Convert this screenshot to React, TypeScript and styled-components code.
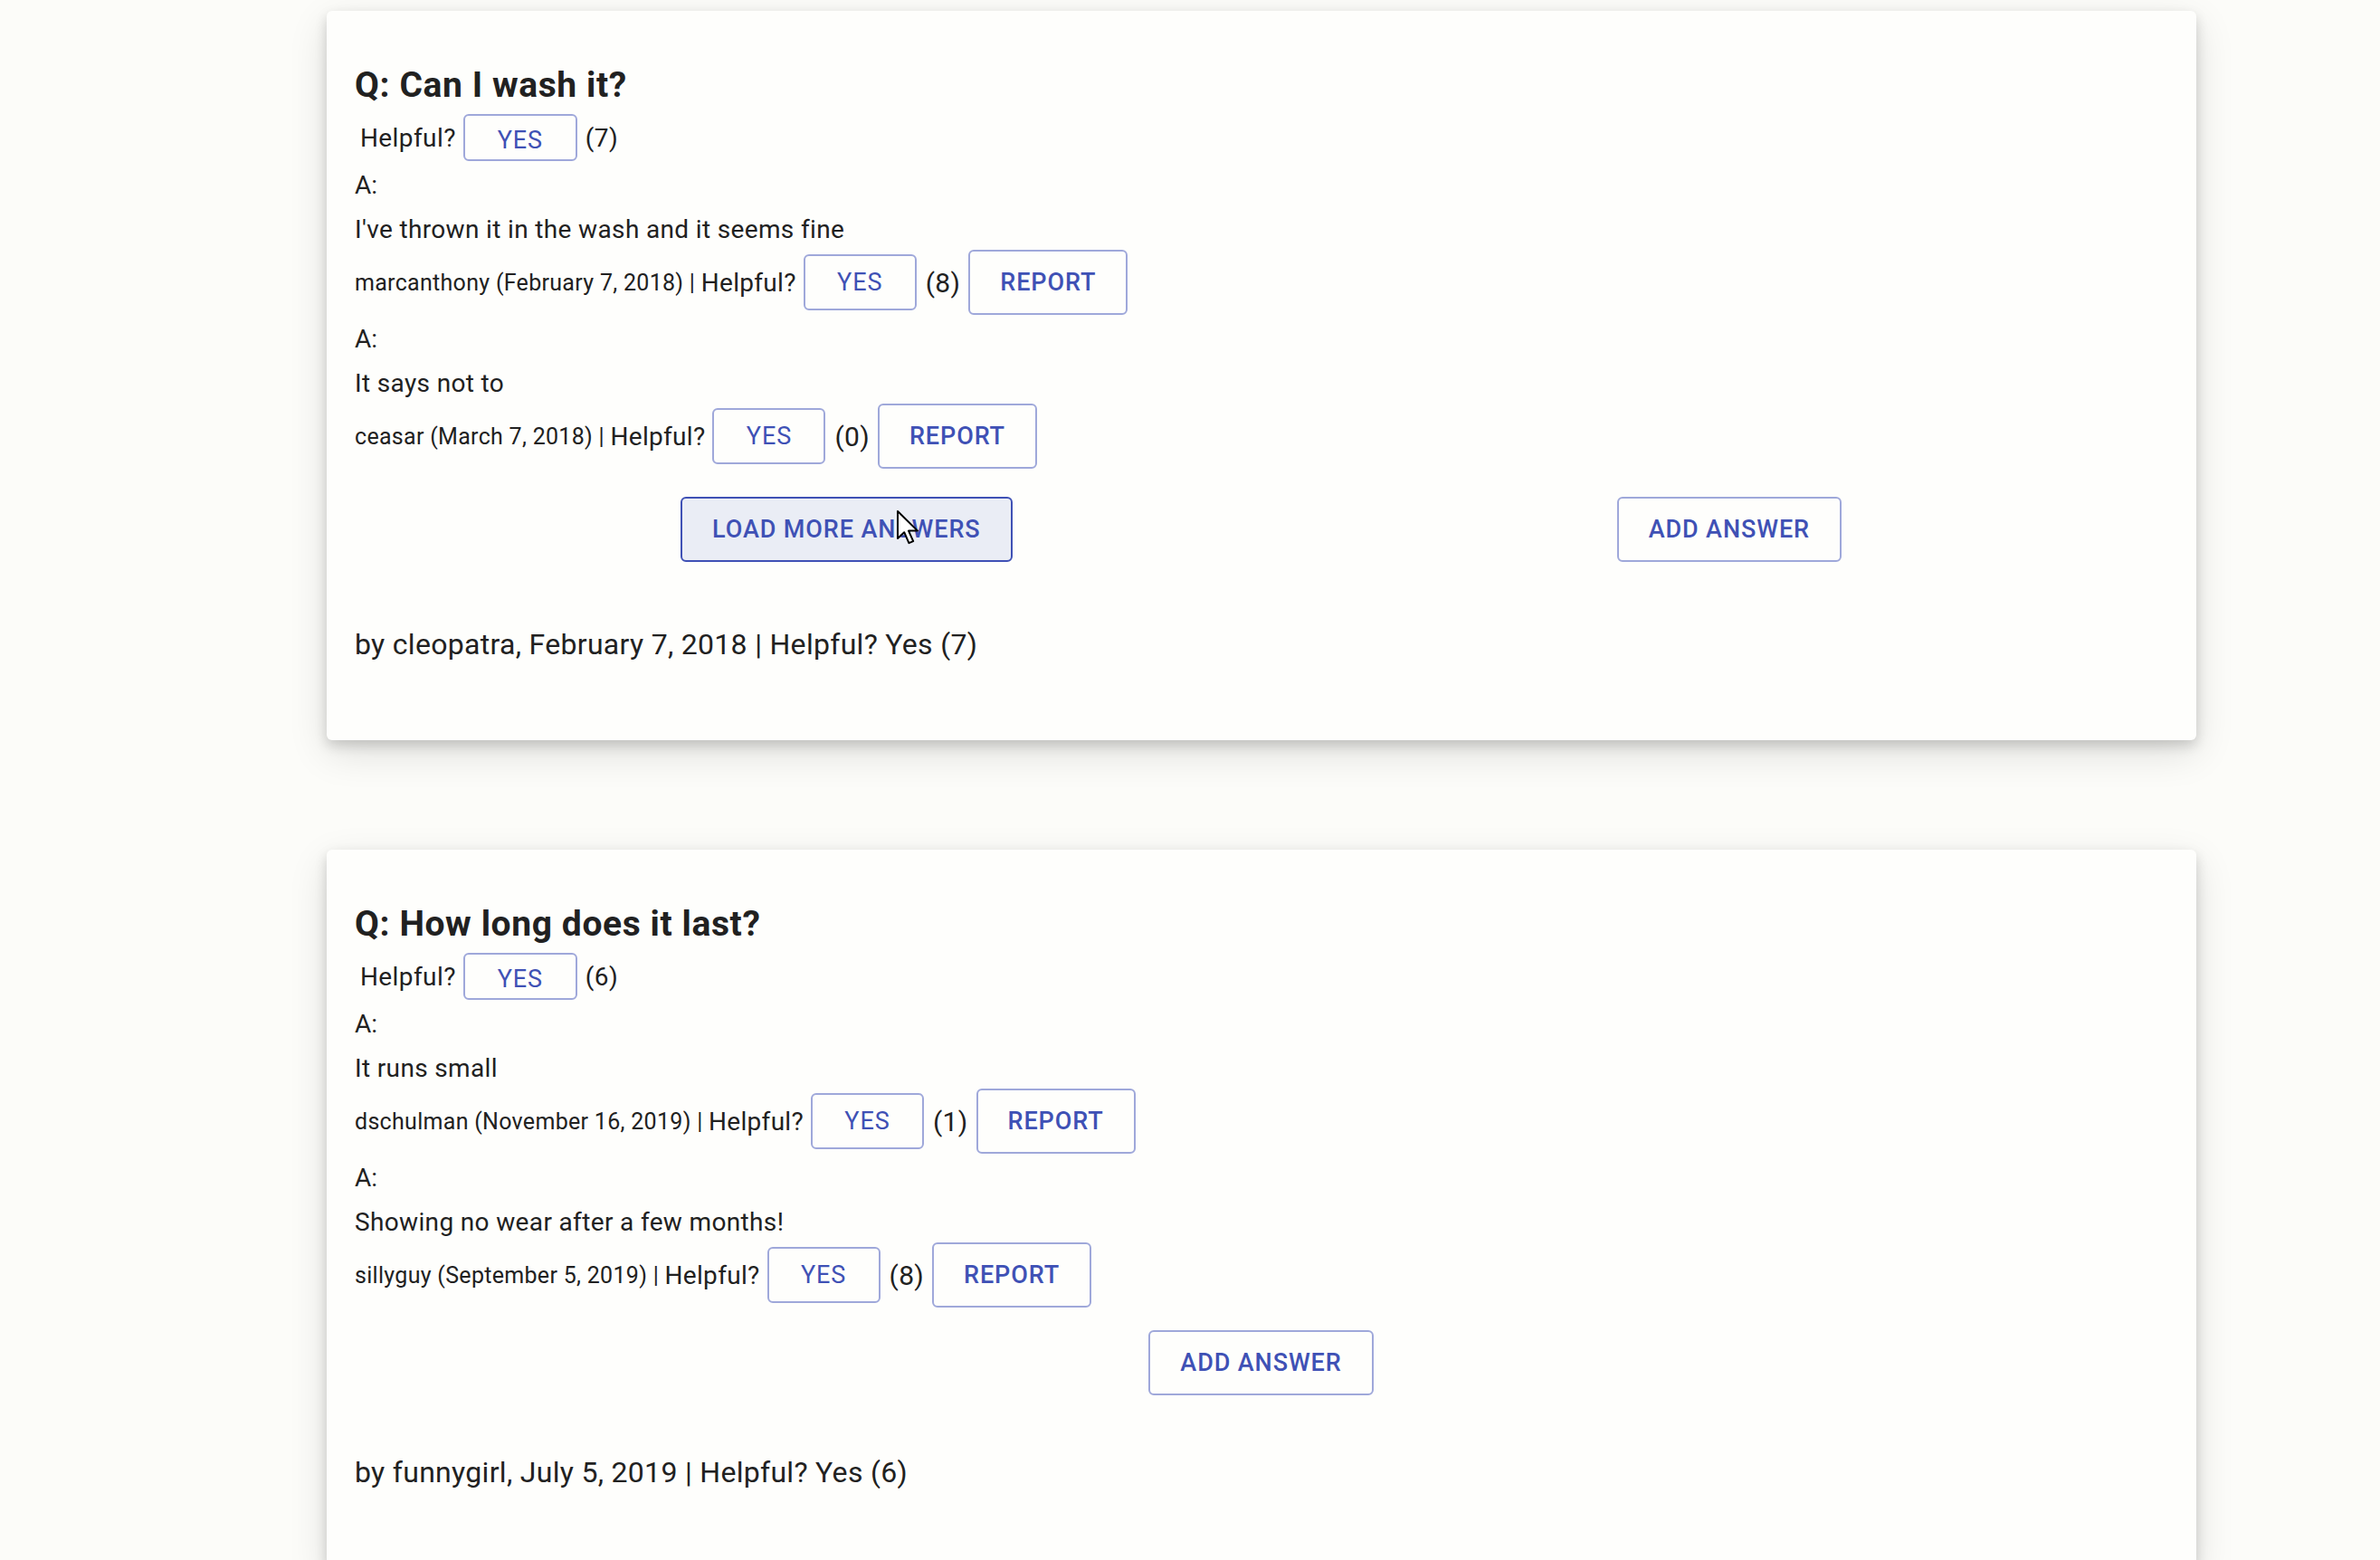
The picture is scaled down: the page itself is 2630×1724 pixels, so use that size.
import styled, { createGlobalStyle } from 'styled-components';

const GlobalStyle = createGlobalStyle`
  body {
    margin: 0;
    background: #fcfcf9;
    font-family: Roboto, "Liberation Sans", sans-serif;
    color: #212121;
  }
`;

interface Answer {
  body: string;
  user: string;
  date: string;
  helpful: number;
}

interface Question {
  title: string;
  helpful: number;
  asker: string;
  date: string;
  answers: Answer[];
  hasMore: boolean;
}

const questions: Question[] = [
  {
    title: 'Can I wash it?',
    helpful: 7,
    asker: 'cleopatra',
    date: 'February 7, 2018',
    hasMore: true,
    answers: [
      { body: "I've thrown it in the wash and it seems fine", user: 'marcanthony', date: 'February 7, 2018', helpful: 8 },
      { body: 'It says not to', user: 'ceasar', date: 'March 7, 2018', helpful: 0 },
    ],
  },
  {
    title: 'How long does it last?',
    helpful: 6,
    asker: 'funnygirl',
    date: 'July 5, 2019',
    hasMore: false,
    answers: [
      { body: 'It runs small', user: 'dschulman', date: 'November 16, 2019', helpful: 1 },
      { body: 'Showing no wear after a few months!', user: 'sillyguy', date: 'September 5, 2019', helpful: 8 },
    ],
  },
];

const Page = styled.div`
  display: flex;
  flex-direction: column;
  gap: 121px;
  padding: 12px 0 0 361px;
`;

const Card = styled.section`
  width: 2066px;
  box-sizing: border-box;
  padding: 60px 32px 86px 31px;
  background: #fefefc;
  border-radius: 6px;
  box-shadow: 0 6px 14px rgba(0, 0, 0, 0.16), 0 14px 44px rgba(0, 0, 0, 0.12);
`;

const Title = styled.h3`
  margin: 0;
  font-size: 39px;
  font-weight: 700;
  line-height: 44px;
  letter-spacing: 0.6px;
`;

const HelpfulRow = styled.div`
  display: flex;
  align-items: center;
  margin-top: 10px;
  padding-left: 6px;
  font-size: 28px;
  letter-spacing: 0.4px;
`;

const Label = styled.div`
  margin-top: 7px;
  font-size: 28px;
  line-height: 40px;
`;

const AnswerBody = styled.div`
  margin-top: 9px;
  font-size: 28px;
  line-height: 40px;
  letter-spacing: 0.35px;
`;

const MetaRow = styled.div`
  display: flex;
  align-items: center;
  margin-top: 2px;
  font-size: 28px;
  letter-spacing: 0.3px;
`;

const MetaText = styled.span`
  font-size: 25px;
  white-space: pre;
`;

const Count = styled.span<{ $big?: boolean }>`
  font-size: ${(p) => (p.$big ? '30px' : '28px')};
  margin: 0 ${(p) => (p.$big ? '9px' : '0')} 0 ${(p) => (p.$big ? '10px' : '9px')};
`;

type BtnKind = 'vote' | 'answerVote' | 'action';

const OutlineButton = styled.button<{ $kind: BtnKind; $hover?: boolean }>`
  position: relative;
  display: inline-flex;
  align-items: center;
  justify-content: center;
  box-sizing: border-box;
  font-family: Roboto, "Liberation Sans", sans-serif;
  font-size: 27px;
  letter-spacing: 0.9px;
  text-transform: uppercase;
  color: #3f51b5;
  background: ${(p) => (p.$hover ? '#eaedf5' : 'transparent')};
  border: 2px solid ${(p) => (p.$hover ? '#3f51b5' : '#9fa8da')};
  border-radius: 6px;
  cursor: pointer;
  font-weight: ${(p) => (p.$kind === 'action' ? 500 : 400)};
  height: ${(p) => (p.$kind === 'vote' ? '52px' : p.$kind === 'answerVote' ? '62px' : '72px')};
  width: ${(p) => (p.$kind === 'action' ? 'auto' : p.$kind === 'vote' ? '126px' : '125px')};
  padding: ${(p) => (p.$kind === 'vote' ? '6px 0 0' : p.$kind === 'action' ? '0 33px' : '0')};
  margin-left: 8px;
`;

const Actions = styled.div<{ $spaced: boolean }>`
  display: flex;
  justify-content: space-around;
  margin-top: ${(p) => (p.$spaced ? '31px' : '25px')};
  padding: 0 26px;

  ${OutlineButton} {
    margin-left: 0;
  }
`;

const Footer = styled.div<{ $spaced: boolean }>`
  margin-top: ${(p) => (p.$spaced ? '71px' : '65px')};
  font-size: 32px;
  line-height: 40px;
  letter-spacing: 0.3px;
`;

const Cursor = styled.svg`
  position: absolute;
  left: 236px;
  top: 12px;
  width: 26px;
  height: 40px;
  pointer-events: none;
`;

function ArrowCursor() {
  return (
    <Cursor viewBox="0 0 13 20">
      <path
        d="M1 1 L1 16 L4.6 12.6 L7.2 18.6 L9.6 17.6 L7 11.8 L12 11.8 Z"
        fill="#fff"
        stroke="#000"
        strokeWidth="1"
        strokeLinejoin="round"
      />
    </Cursor>
  );
}

function AnswerBlock({ answer }: { answer: Answer }) {
  return (
    <>
      <Label>A:</Label>
      <AnswerBody>{answer.body}</AnswerBody>
      <MetaRow>
        <MetaText>{`${answer.user} (${answer.date}) | `}</MetaText>
        <span>Helpful?</span>
        <OutlineButton $kind="answerVote">Yes</OutlineButton>
        <Count $big>({answer.helpful})</Count>
        <OutlineButton $kind="action" style={{ marginLeft: 0 }}>Report</OutlineButton>
      </MetaRow>
    </>
  );
}

function QuestionCard({ question }: { question: Question }) {
  return (
    <Card>
      <Title>Q: {question.title}</Title>
      <HelpfulRow>
        <span>Helpful?</span>
        <OutlineButton $kind="vote">Yes</OutlineButton>
        <Count>({question.helpful})</Count>
      </HelpfulRow>
      {question.answers.map((a) => (
        <AnswerBlock key={a.user} answer={a} />
      ))}
      <Actions $spaced={question.hasMore}>
        {question.hasMore && (
          <OutlineButton $kind="action" $hover>
            Load more answers
            <ArrowCursor />
          </OutlineButton>
        )}
        <OutlineButton $kind="action">Add answer</OutlineButton>
      </Actions>
      <Footer $spaced={question.hasMore}>
        by {question.asker}, {question.date} | Helpful? Yes ({question.helpful})
      </Footer>
    </Card>
  );
}

export default function App() {
  return (
    <>
      <GlobalStyle />
      <Page>
        {questions.map((q) => (
          <QuestionCard key={q.title} question={q} />
        ))}
      </Page>
    </>
  );
}
